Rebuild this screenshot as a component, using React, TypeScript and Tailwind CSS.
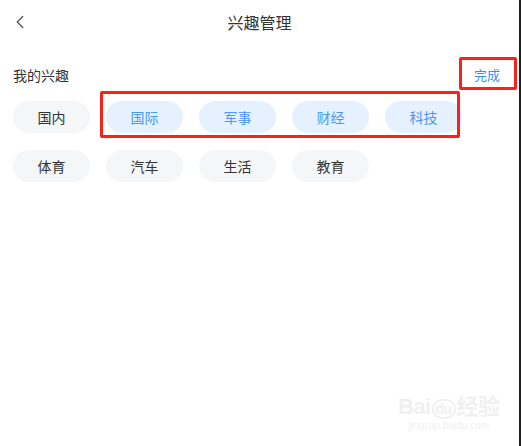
import { ChevronLeft } from "lucide-react";

// Interest management screen with red annotation boxes drawn over it
const mine = [
  { name: "国内", active: false },
  { name: "国际", active: true },
  { name: "军事", active: true },
  { name: "财经", active: true },
  { name: "科技", active: true },
];

const more = ["体育", "汽车", "生活", "教育"];

function Pill({ name, active }: { name: string; active?: boolean }) {
  return (
    <div
      className={`w-[77px] h-[32px] rounded-full flex items-center justify-center text-[14px] ${
        active ? "bg-[#e5f1fe] text-[#4b98f2]" : "bg-[#f5f6f8] text-[#333]"
      }`}
    >
      {name}
    </div>
  );
}

export default function App() {
  return (
    <div
      className="relative w-[521px] h-[446px] bg-white border-r-2 border-[#1f1f1f] overflow-hidden"
      style={{ fontFamily: '"Noto Sans CJK SC", "Noto Sans", sans-serif' }}
    >
      {/* header */}
      <div className="grid grid-cols-[1fr_auto_1fr] items-center h-[44px]">
        <ChevronLeft className="ml-[9px] w-[22px] h-[22px] text-[#555]" strokeWidth={1.4} />
        <div className="text-[16px] text-[#333]">兴趣管理</div>
        <div />
      </div>

      {/* my interests */}
      <div className="px-[13px]">
        <div className="mt-[21px] h-[20px] flex items-center justify-between">
          <span className="text-[14px] text-[#333]">我的兴趣</span>
          <span className="mr-[6px] text-[13px] text-[#3d8ff3]">完成</span>
        </div>
        <div className="mt-[16px] flex flex-wrap gap-x-[16px]">
          {mine.map((p) => (
            <Pill key={p.name} name={p.name} active={p.active} />
          ))}
        </div>
        <div className="mt-[17px] flex flex-wrap gap-x-[16px]">
          {more.map((n) => (
            <Pill key={n} name={n} />
          ))}
        </div>
      </div>

      {/* annotation boxes */}
      <div className="absolute left-[459px] top-[57px] w-[58px] h-[33px] border-[3px] border-[#f5231b] rounded-[2px]" />
      <div className="absolute left-[100px] top-[91px] w-[360px] h-[47px] border-[3px] border-[#f5231b] rounded-[2px]" />

      {/* watermark */}
      <div className="absolute left-[398px] top-[396px] flex flex-col items-center text-[#f0f0f0] leading-none">
        <span className="text-[22px] font-bold tracking-tight" style={{ fontFamily: '"Liberation Sans", "Noto Sans CJK SC", sans-serif' }}>
          Bai<span className="text-[14px] border-2 border-[#f0f0f0] rounded-full px-[2px] mx-[1px]">du</span>经验
        </span>
        <span className="text-[10px] mt-[3px]" style={{ fontFamily: '"Liberation Sans", sans-serif' }}>
          jingyan.baidu.com
        </span>
      </div>
    </div>
  );
}
